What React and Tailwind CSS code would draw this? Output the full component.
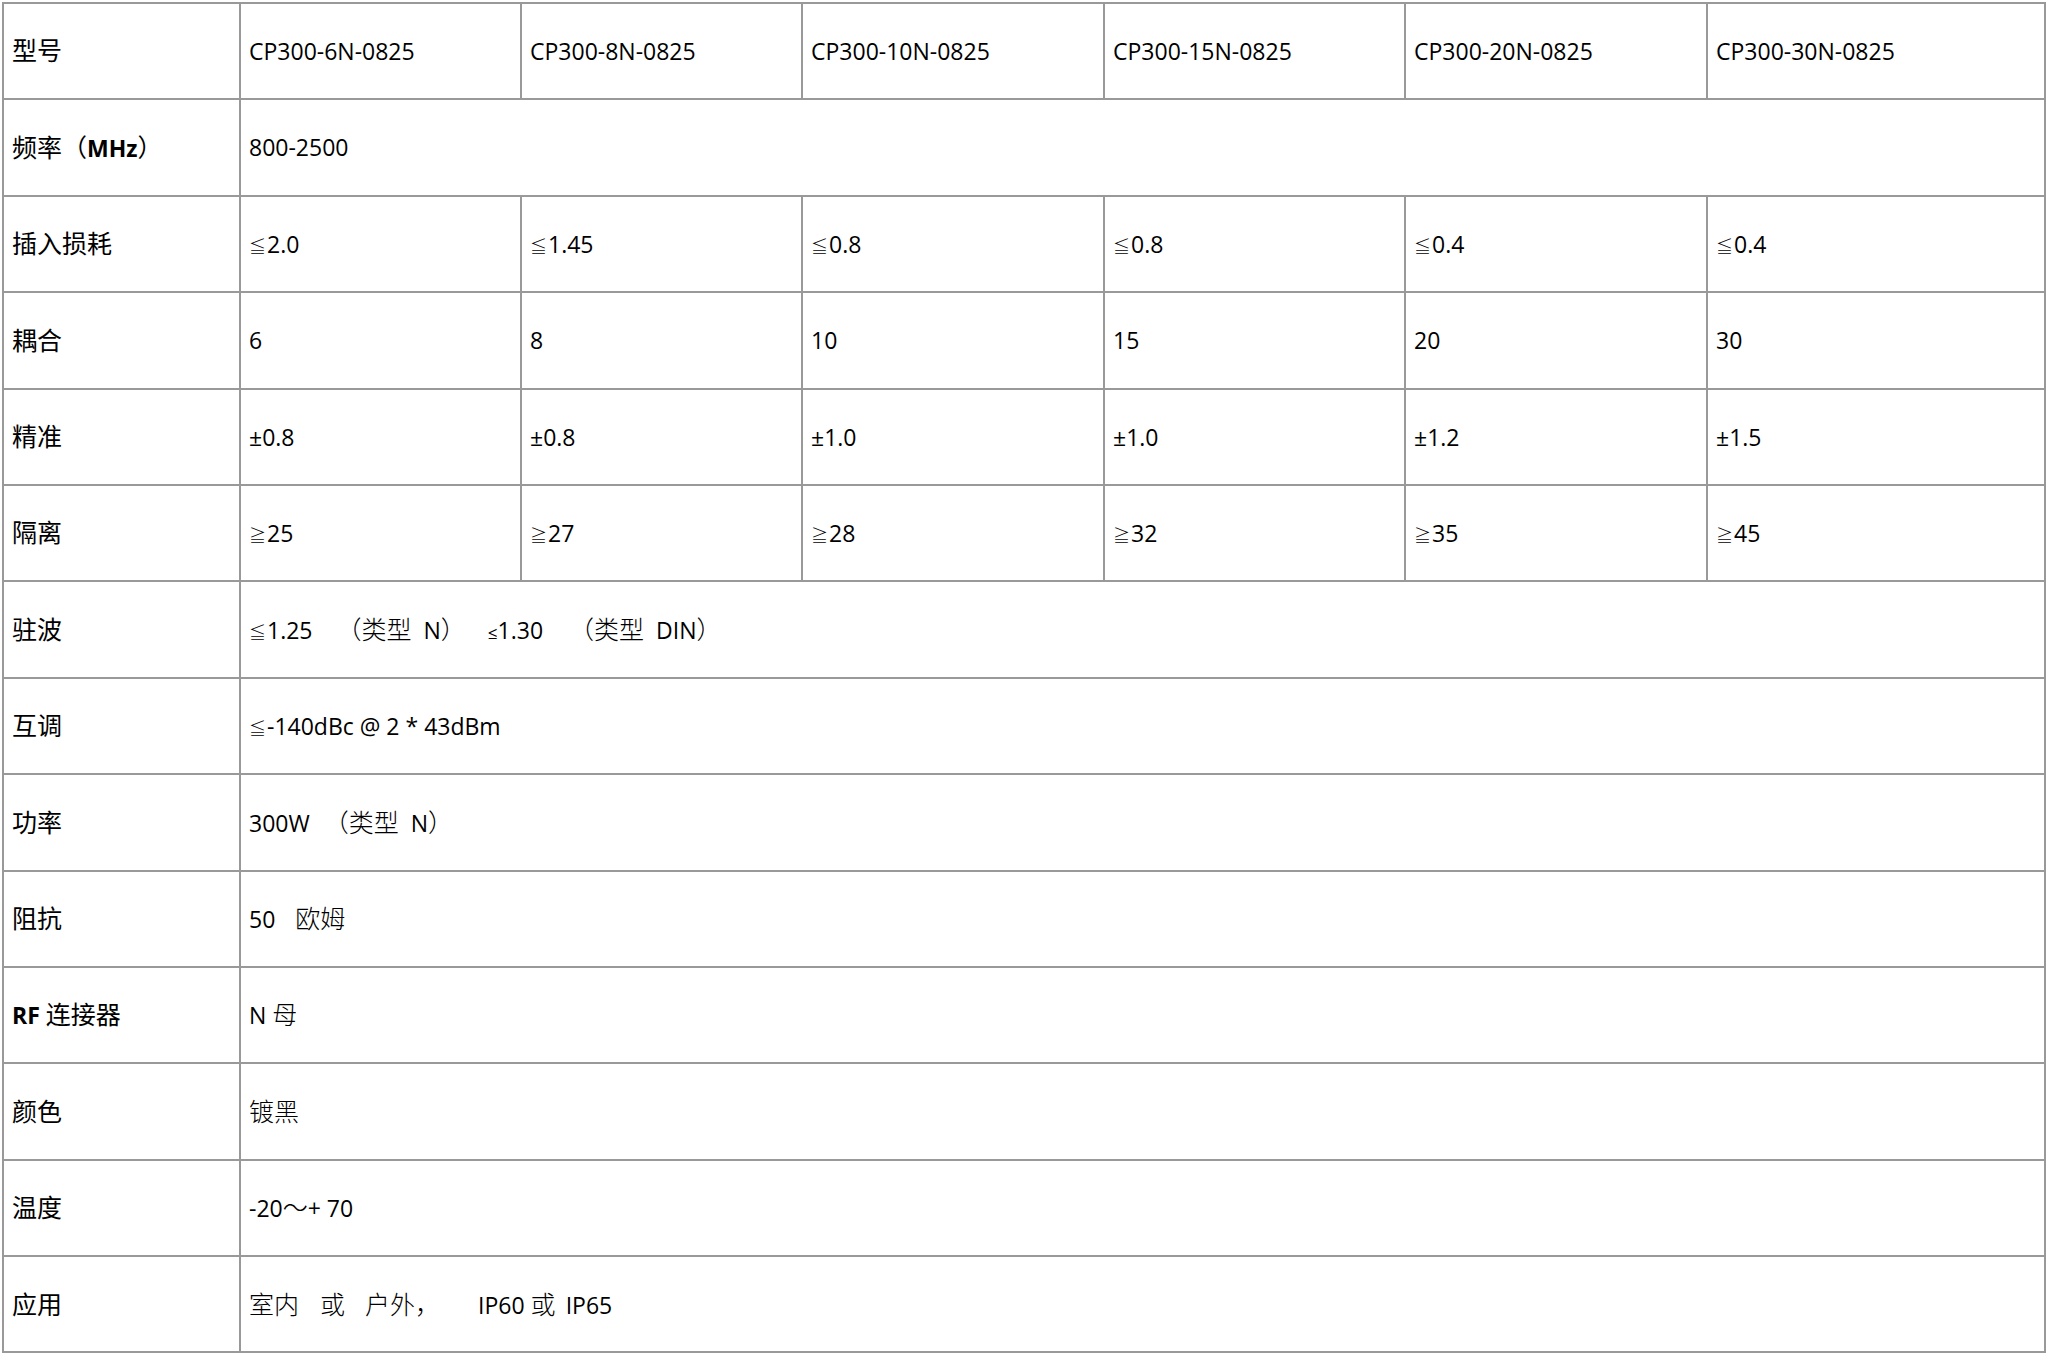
import React from 'react';

// spec sheet for the CP300 coupler series
const Zh = ({ children, light = false, className = '' }) => (
    <span className={`text-[25px] ${light ? 'font-light' : ''} ${className}`}>{children}</span>
);

// the ≦ / ≧ marks are small and thin in the sheet
const Sym = ({ children }) => <span className="text-[17px] font-light mr-[1px]">{children}</span>;

const models = ['CP300-6N-0825', 'CP300-8N-0825', 'CP300-10N-0825', 'CP300-15N-0825', 'CP300-20N-0825', 'CP300-30N-0825'];

const le = (v) => <><Sym>≦</Sym>{v}</>;
const ge = (v) => <><Sym>≧</Sym>{v}</>;

const rows = [
    { label: <Zh>型号</Zh>, cells: models },
    { label: <><Zh>频率（</Zh><b className="font-bold">MHz</b><Zh>）</Zh></>, span: '800-2500' },
    { label: <Zh>插入损耗</Zh>, cells: [le('2.0'), le('1.45'), le('0.8'), le('0.8'), le('0.4'), le('0.4')] },
    { label: <Zh>耦合</Zh>, cells: ['6', '8', '10', '15', '20', '30'] },
    { label: <Zh>精准</Zh>, cells: ['±0.8', '±0.8', '±1.0', '±1.0', '±1.2', '±1.5'] },
    { label: <Zh>隔离</Zh>, cells: [ge('25'), ge('27'), ge('28'), ge('32'), ge('35'), ge('45')] },
    {
        label: <Zh>驻波</Zh>,
        span: (
            <>
                {le('1.25')}
                <Zh light className="ml-[24px]">（类型</Zh>
                <span className="ml-[12px]">N</span>
                <Zh light>）</Zh>
                <span className="ml-[22px]"><span className="text-[17px]">≤</span>1.30</span>
                <Zh light className="ml-[26px]">（类型</Zh>
                <span className="ml-[12px]">DIN</span>
                <Zh light>）</Zh>
            </>
        )
    },
    { label: <Zh>互调</Zh>, span: le('-140dBc @ 2 * 43dBm') },
    {
        label: <Zh>功率</Zh>,
        span: (
            <>
                300W
                <Zh light className="ml-[14px]">（类型</Zh>
                <span className="ml-[12px]">N</span>
                <Zh light>）</Zh>
            </>
        )
    },
    { label: <Zh>阻抗</Zh>, span: <>50<Zh light className="ml-[20px]">欧姆</Zh></> },
    { label: <><b className="font-bold">RF</b> <Zh>连接器</Zh></>, span: <>N <Zh light>母</Zh></> },
    { label: <Zh>颜色</Zh>, span: <Zh light>镀黑</Zh> },
    { label: <Zh>温度</Zh>, span: <>-20<Zh light>～</Zh>+ 70</> },
    {
        label: <Zh>应用</Zh>,
        span: (
            <>
                <Zh light>室内</Zh>
                <Zh light className="ml-[21px]">或</Zh>
                <Zh light className="ml-[20px]">户外，</Zh>
                <span className="ml-[38px]">IP60</span>
                <Zh light className="ml-[6px]">或</Zh>
                <span className="ml-[10px]">IP65</span>
            </>
        )
    }
];

const widths = ['w-[237px]', 'w-[281px]', 'w-[281px]', 'w-[302px]', 'w-[301px]', 'w-[302px]', 'w-[338px]'];

export default function App() {
    return (
        <div className="min-h-screen bg-white pt-[2px] pl-[2px]">
            <table
                className="border-collapse table-fixed w-[2043px] text-[23px] text-black"
                style={{ fontFamily: '"Open Sans", "Noto Sans CJK SC", sans-serif' }}
            >
                <colgroup>
                    {widths.map((w, i) => (
                        <col key={i} className={w} />
                    ))}
                </colgroup>
                <tbody>
                    {rows.map((row, i) => (
                        <tr key={i} className="h-[96.4px]">
                            <td className="border-2 border-[#999] pl-[8px] align-middle whitespace-nowrap">
                                {row.label}
                            </td>
                            {row.cells ? (
                                row.cells.map((c, j) => (
                                    <td key={j} className="border-2 border-[#999] pl-[8px] align-middle whitespace-nowrap">
                                        {c}
                                    </td>
                                ))
                            ) : (
                                <td colSpan={6} className="border-2 border-[#999] pl-[8px] align-middle whitespace-nowrap">
                                    {row.span}
                                </td>
                            )}
                        </tr>
                    ))}
                </tbody>
            </table>
        </div>
    );
}
